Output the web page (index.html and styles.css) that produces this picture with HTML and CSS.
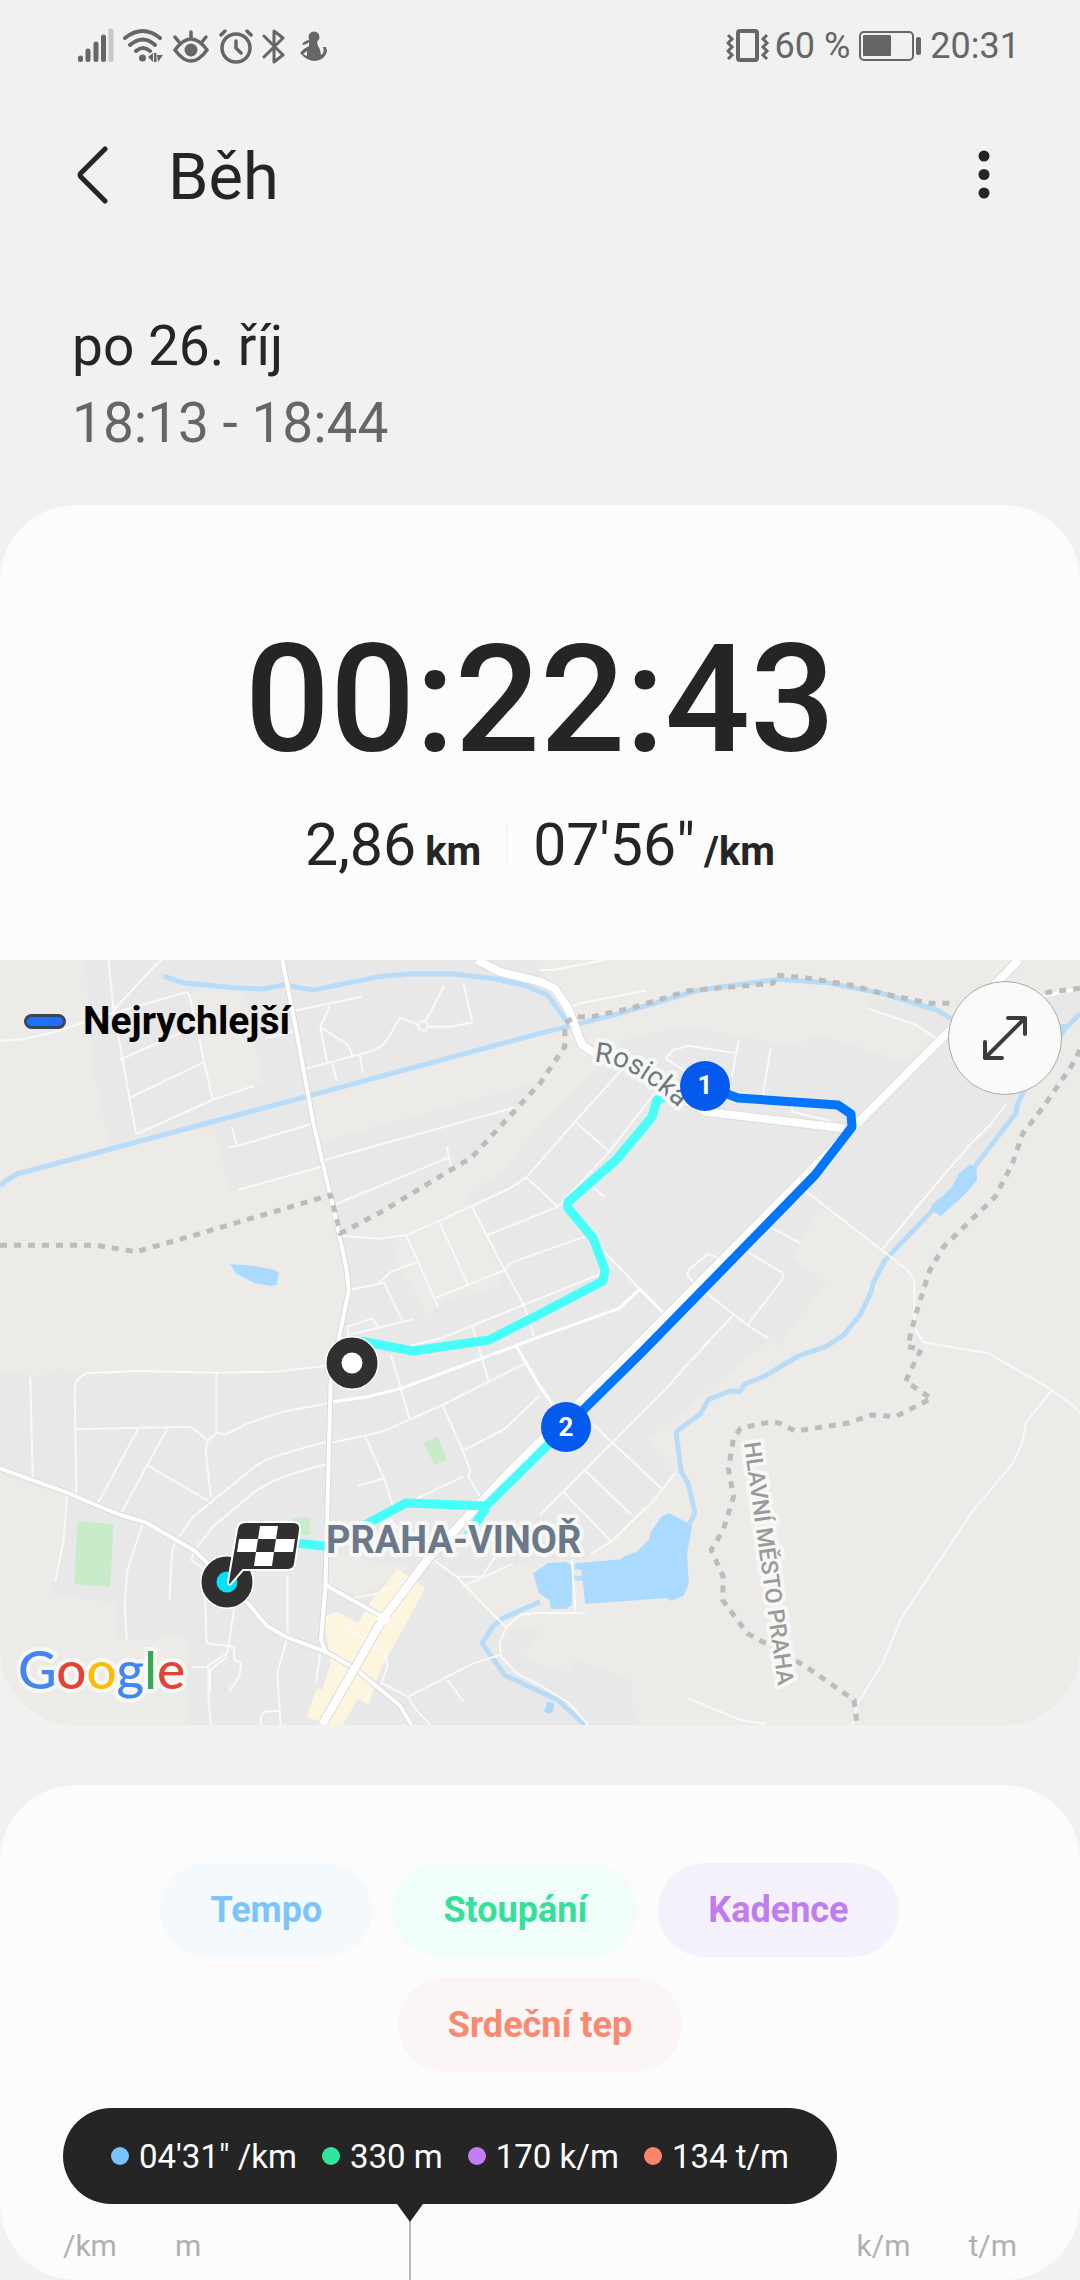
FILE: index.html
```html
<!DOCTYPE html>
<html lang="cs">
<head>
<meta charset="utf-8">
<meta name="viewport" content="width=device-width, initial-scale=1">
<title>Běh</title>
<link rel="stylesheet" href="styles.css">
</head>
<body>
<div class="status-bar">
  <div class="status-group">
    <svg width="36" height="36" viewBox="0 0 36 36" aria-hidden="true"><g stroke="#666" stroke-width="5" stroke-linecap="round"><path d="M2.5 30v1.500M10 23v8.500M18 16v15.500M25.500 9v22.500"/><path d="M33 3v28.500" stroke="#c8c8c8"/></g></svg>
    <svg width="40" height="36" viewBox="0 0 40 36" aria-hidden="true"><g fill="none" stroke="#666" stroke-width="4" stroke-linecap="round"><path d="M2 10Q20-4 37 10M7 17Q20 6 32 17M13 23Q20 17 27 23"/></g><circle cx="19.500" cy="30" r="3.500" fill="#666"/><path d="M25 29l5-4v9zM31 25h2.500v9H31zM34 27h6l-5 7z" fill="#666"/></svg>
    <svg width="38" height="36" viewBox="0 0 38 36" aria-hidden="true"><g fill="none" stroke="#666" stroke-width="3.500" stroke-linecap="round"><path d="M3 22Q19 0 35 22Q19 44 3 22zM19 4v7M3 9l4 5M34 9l-4 5"/></g><circle cx="19" cy="22" r="6.500" fill="#666"/></svg>
    <svg width="34" height="36" viewBox="0 0 34 36" aria-hidden="true"><g fill="none" stroke="#666" stroke-width="3.500" stroke-linecap="round"><circle cx="17" cy="20" r="14"/><path d="M17 13v7l5 5M2 7l4-4M32 7l-4-4"/></g></svg>
    <svg width="24" height="36" viewBox="0 0 24 36" aria-hidden="true"><path d="M2 8l19 19-9 7V3l9 7L2 29" fill="none" stroke="#666" stroke-width="3" stroke-linejoin="round" stroke-linecap="round"/></svg>
    <svg class="seal" width="28" height="36" viewBox="0 0 28 36" aria-hidden="true"><circle cx="15" cy="9" r="5.500" fill="#666"/><path d="M10 12q-6 1-7 5q6-1 7-3v4q-5 2-9 7q7 8 15 8q10-1 12-10l-1-4h-3q2 6-2 8q-1-7-3-9l-1-5z" fill="#666"/><path d="M8 23l-4 3 4 2z" fill="#f1f1f1"/></svg>
  </div>
  <div class="status-group status-right">
    <svg width="44" height="36" viewBox="0 0 44 36" aria-hidden="true"><g fill="none" stroke="#666"><rect x="12" y="3" width="19" height="29" rx="2" stroke-width="4"/><path d="M2 7l4 4-4 4 4 4-4 4 4 4-4 4M41 7l-4 4 4 4-4 4 4 4-4 4 4 4" stroke-width="3"/></g></svg>
    <span class="battery-label">60 %</span>
    <svg width="64" height="36" viewBox="0 0 64 36" aria-hidden="true"><rect x="1" y="4" width="53" height="28" rx="4" fill="none" stroke="#666" stroke-width="2"/><rect x="4" y="7" width="28" height="21" rx="1" fill="#666"/><rect x="57" y="9" width="5" height="18" rx="2" fill="#666"/></svg>
    <span class="clock">20:31</span>
  </div>
</div>

<header class="app-bar">
  <button class="icon-button" type="button" aria-label="Zpět"><svg width="32" height="58" viewBox="0 0 32 58"><path d="M29 3L5 27q-2 2 0 4l24 24" fill="none" stroke="#252525" stroke-width="5" stroke-linecap="round"/></svg></button>
  <h1 class="title">Běh</h1>
  <button class="icon-button" type="button" aria-label="Další možnosti"><svg width="12" height="50" viewBox="0 0 12 50"><g fill="#252525"><circle cx="6" cy="6" r="5.500"/><circle cx="6" cy="24.500" r="5.500"/><circle cx="6" cy="43" r="5.500"/></g></svg></button>
</header>

<main>
  <div class="when">
    <p class="date">po 26. říj</p>
    <p class="time">18:13 - 18:44</p>
  </div>

  <section class="card summary">
    <p class="duration">00:22:43</p>
    <div class="metrics">
      <p class="metric">2,86<span class="unit">km</span></p>
      <span class="metric-divider"></span>
      <p class="metric">07'56"<span class="unit">/km</span></p>
    </div>
    <div class="map">
      <svg class="map-canvas" viewBox="0 0 1080 765" aria-hidden="true">
        <svg width="1080" height="765" viewBox="0 30 3136 2295" preserveAspectRatio="none">
          <rect y="30" width="3136" height="2295" fill="#e8e8e8"/>
          <g fill="#ecebe7">
            <path d="M0 30H247L272 370 320 590 620 530 668 720 690 720 945 650 960 740 985 860 1012 1022 975 1200 945 1248 770 1265 250 1265 168 1258 115 1282 0 1262z"/>
            <path d="M555 125H710L762 400 617 450z"/>
            <path d="M905 440L1568 250 1658 212 1630 140 1548 30H3136V120L3020 145 3060 220 2780 200 2528 135 2520 175 2740 260 2628 335 2378 255 2303 290 1993 228 1808 270 1568 520 1470 650 1360 740 1368 768 1280 815 1180 855 1100 868 985 858 1370 625 1400 590 1568 395 930 575z"/>
            <path d="M3136 190L3088 230 3048 330 2968 440 2953 480 2833 640 2698 790 2578 920 2558 900 2378 770 2303 925 2398 1000 2258 1190 2233 1170 1883 1470 1958 1570 1773 1775 1698 1830 1548 1830 1338 1900 1468 2040 1568 2040 1523 2115 1568 2145 1653 2165 1668 2130 1833 2190 1838 2280 1858 2325H3136z"/>
            <path d="M0 1575L195 1635 185 1770 145 1930 335 1960 338 2072 540 2060 550 2325H0zM950 1810L1190 1850 1130 1890 1040 1940 950 1905z"/>
            <path d="M1130 880L1180 860 1370 768 1415 855 1425 910 1460 960 1450 1005 1280 1060 1240 1100z"/>
          </g>
          <g fill="#c8ecca"><path d="M225 1713L330 1722 320 1910 215 1902zM1230 1478L1270 1460 1298 1528 1262 1546zM850 1703H900V1755H850z"/></g>
          <path fill="#fdf6de" d="M1155 1857L1235 1915 1100 2170 1070 2265 1040 2245 995 2325H955L890 2300 920 2215 935 2220 960 2140 940 2000 980 1985 1040 2018 1080 1950z"/>
          <g class="stream">
            <path d="M0 708L20 690 50 672 900 437 1568 250 1800 190 2030 120 2260 88 2400 98 2560 130 2720 180 2760 205 3100 230 3136 190M3100 225L2985 400 2955 460 2950 490 2830 650 2700 790 2570 930 2535 1000 2530 1025 2500 1090 2450 1155 2398 1190 2318 1218 2218 1280 2163 1302 2148 1325 2118 1323 2058 1348 2033 1392 1963 1445 1978 1565 1998 1600 2018 1688 2003 1720"/>
            <path d="M475 78L530 98 680 113 765 117 825 105 910 120 1100 80 1180 72 1320 72 1440 87 1520 105 1590 135 1650 220M1568 1955L1460 2005 1430 2030 1400 2080 1465 2175 1568 2225 1620 2250 1698 2325M1650 1885H1700"/>
          </g>
          <g fill="#aadaff">
            <path d="M1943 1690L2010 1725 1995 1810 2000 1900 1985 1937 1948 1952 1935 1944 1700 1962 1688 1860 1668 1858 1670 1840 1805 1828 1810 1820 1850 1805 1885 1768 1888 1750 1920 1700zM1548 1870L1590 1840 1640 1835 1662 1845 1660 1965 1645 1977 1600 1977 1595 1950 1565 1930z"/>
            <path d="M668 942L740 948 800 960 810 970 803 1005 785 1008 740 1000 685 970zM2817 643L2835 655 2837 690 2800 735 2732 798 2703 780 2705 765 2760 720 2785 670zM1580 2285L1590 2255 1610 2260 1605 2285 1595 2292z"/>
          </g>
          <g class="lane">
            <path d="M315 30L330 180 395 552M470 30L455 42 330 180M0 272L70 268 180 240 260 210 540 127 550 135 617 448M347 330L575 225M370 447L595 335M397 552L617 450 735 408M665 592L690 588 912 520M673 530L688 588M690 720L940 648M942 630L1495 472M975 762L1305 622M1297 588L1310 650"/>
            <path d="M855 182L1050 140M952 160L955 175 930 230 950 340M930 230L1010 285 1025 318M885 357L1080 303C1130 285 1135 240 1162 203L1215 225M1235 215L1290 108M1242 230H1310L1372 217 1345 98M965 340L978 392M1045 315L1054 370M770 265L850 245"/>
            <circle cx="1228" cy="228" r="14"/>
            <path d="M988 857L1100 866 1180 856 1370 768 1480 715 1528 682 1670 515 1800 365M1528 682L1568 720 1620 770M1370 768L1465 960 1520 1062 1550 1160M1412 857L1620 770M1465 960L1480 940 1568 907 1698 860M1262 1045L1465 960M1180 856L1272 1070M1275 815L1358 1002M1015 1020L1115 998 1170 1115M1100 998L1135 965 1210 937M1010 1160V1130L1080 1105 1100 1132M1010 1155L1200 1108M1190 1187L1280 1165 1568 1045 1748 970M1370 1125L1390 1190 1420 1298"/>
            <path d="M88 1282L95 1585M945 1248L800 1265 630 1268 400 1263 250 1270C220 1285 217 1300 217 1330L222 1640M217 1438L555 1430 603 1472 597 1500 612 1640M628 1268V1448M603 1472L628 1448 655 1453 720 1420 820 1385 955 1360M403 1433L283 1662M487 1433L350 1692M430 1547L603 1652M948 1475C860 1500 780 1520 740 1550L560 1700 510 1775C495 1800 500 1830 492 1950M948 1543C800 1580 760 1610 740 1625L620 1728 565 1800 555 1830 610 1870"/>
            <path d="M955 1480L1110 1445 1285 1365 1525 1240M1060 1458L1115 1585 1140 1665M1040 1607L1115 1585M1165 1320L1190 1410M1135 1215L1165 1315M1285 1365L1345 1505 1365 1560 1360 1580 1400 1650M1345 1502L1465 1437 1568 1335M1205 1648L1345 1580M415 1718L370 1860 362 1960 368 2070M195 1635L185 1770 160 1895M835 1875V2060L805 2170 815 2325M757 2325V2300L770 2285 815 2282M680 1975L660 2110 600 2150 555 2152M595 1930L600 2080 680 2090V2130L700 2140 695 2180 665 2225M610 2225V2160L660 2120M605 2150V2240L612 2325"/>
            <path d="M1130 1705L1200 1785 1325 1880 1470 2033 1450 2080 1455 2120 1500 2170 1568 2205 1653 2260 1708 2325M1325 1880L1400 1880 1450 1800M1345 1910L1490 1840M1470 2033L1510 1995 1568 1988 1700 1990M1660 1830L1672 1990M1450 2115L1375 2140 1185 2240 1110 2200M1300 2190L1345 2255M995 2027L1120 2110 1125 2150 1105 2205M1185 2240L1205 2275 1250 2325M1025 1945L1100 1930 1180 1890M930 2110L918 2195"/>
            <path d="M2063 1170L1985 1255 1940 1310 1568 1695M1718 1420L1920 1615M1700 1563L1835 1695M1635 1625L1775 1775M1958 1570L1900 1650 1775 1775 1715 1812M1568 60H1608L1755 30M1650 175L1690 158 1875 122M2520 175L2660 225 2720 265M1933 325L1955 300 2000 287 2138 310M1933 325L2000 370M2145 272L2125 380M2238 295L2215 435M1670 515L1770 605 1900 430M1770 605L1620 770M1720 710L1755 740M2300 470V485L2400 510 2425 520M1755 905L1858 1017"/>
            <path d="M2335 720L2560 900 2635 960 2655 990V1130L2680 1175 2690 1178 2870 1210 3055 1320 3120 1370 3136 1390M2560 900L2740 675 2820 580 2875 525 2923 460M3055 1320L2980 1415 2968 1480 2940 1540 2820 1690 2670 1920 2615 2010 2560 2145 2490 2260 2475 2325M2235 830L2325 880M2170 905L2275 970 2270 990 2170 1125 2230 1165M2050 1028L2170 1125M2130 1095L2035 1198M2090 925L2055 912 2000 960 1995 975 2015 1000M2000 2245L2150 2310 2225 2322"/>
          </g>
          <g class="street">
            <path d="M958 1357L1060 1342 1165 1315 1568 1160 1798 1075 1858 1017 1933 1095M1500 1190L1568 1310 1606 1365M3020 140L3136 115"/>
          </g>
          <path class="casing-small" d="M820 30L860 240 910 520 960 740 1005 950 1013 1020 985 1160 960 1300 945 1910 932 2070 945 2105M0 1555L200 1630 285 1668 350 1695 425 1718 565 1802 720 1960 775 2028 835 2063 945 2105 1030 2155 1160 2265 1195 2325M945 1905L1110 2000"/>
          <path class="road-small" d="M820 30L860 240 910 520 960 740 1005 950 1013 1020 985 1160 960 1300 945 1910 932 2070 945 2105M0 1555L200 1630 285 1668 350 1695 425 1718 565 1802 720 1960 775 2028 835 2063 945 2105 1030 2155 1160 2265 1195 2325M945 1905L1110 2000"/>
          <path class="casing" d="M2958 30L2740 260 2475 535 1838 1198 1674 1365 1470 1575 1240 1830 1110 2010 1030 2155 935 2325M1385 30L1450 65 1568 95 1610 115 1650 175 1690 285 1720 305 1800 335 2050 485 2450 535"/>
          <path class="road" d="M2958 30L2740 260 2475 535 1838 1198 1674 1365 1470 1575 1240 1830 1110 2010 1030 2155 935 2325M1385 30L1450 65 1568 95 1610 115 1650 175 1690 285 1720 305 1800 335 2050 485 2450 535"/>
          <circle cx="1113" cy="2006" r="18" fill="#fff"/>
          <path class="border-line" d="M0 886H280L395 905 560 857 960 735 988 850 1100 790 1370 622 1568 400 1640 290V220L1670 200H1720L1830 175 2000 122 2245 100 2250 75 2330 82 2470 105 2560 130 2700 160 2760 160M3136 115L3020 130M3136 300L3110 350 3070 410 3030 470 2970 550 2940 640 2890 740 2830 800 2740 890 2700 960 2660 1090 2635 1190 2675 1197 2640 1270 2630 1295 2705 1345 2600 1400 2530 1395 2460 1420 2310 1443 2260 1418 2225 1418 2150 1435 2130 1465 2115 1555 2130 1640 2100 1740 2065 1800 2100 1880 2098 1950 2170 2050 2240 2090 2340 2150 2480 2250 2488 2325"/>
        </svg>

        <g fill="none" stroke-width="9" stroke-linejoin="round">
          <path stroke="#47fff8" d="M360 381L413 391 489 380 540 354 603 321 605 310 593 278 568 248V242L616 200 652 157 657 140 690 128M566 467L486 546 406 543 365 565 324 586 296 583M486 548L468 575M250 636l-6-4"/>
          <path stroke="#0076ff" d="M705 126L738 138 838 145 851 154 852 167 815 215 643 391 566 467"/>
        </g>

        <g class="place-label">
          <path id="rosicka" d="M594 102C622 103 648 118 694 162" fill="none" stroke="none"/>
          <text class="label-street"><textPath href="#rosicka">Rosická</textPath></text>
          <text class="label-town" x="326" y="593">PRAHA-VINOŘ</text>
          <text class="label-region" transform="translate(744 483) rotate(82)">HLAVNÍ MĚSTO PRAHA</text>
          <text class="label-brand" x="18" y="729"><tspan fill="#4285f4">G</tspan><tspan fill="#e34234">o</tspan><tspan fill="#fbbc05">o</tspan><tspan fill="#4285f4">g</tspan><tspan fill="#34a853">l</tspan><tspan fill="#e34234">e</tspan></text>
        </g>

        <g class="km-marker">
          <circle cx="705" cy="126" r="25"/><text x="705" y="134">1</text>
          <circle cx="566" cy="467" r="25"/><text x="566" y="476">2</text>
        </g>
        <circle cx="352" cy="403" r="18" fill="#fff" stroke="#fff" stroke-width="18"/>
        <circle cx="352" cy="403" r="18" fill="#fff" stroke="#303030" stroke-width="15"/>
        <circle cx="227" cy="622" r="18" fill="#fff" stroke="#fff" stroke-width="18"/>
        <circle cx="227" cy="622" r="18" fill="#00e2fb" stroke="#303030" stroke-width="15"/>
        <path d="M246 562h47q8 0 7 8l-5 34q-1 6-7 6h-45l-12 14q-3 2-3-2l9-53q1-7 9-7z" fill="#303030" stroke="#fff" stroke-width="2"/>
        <path d="M260 566h18l-2 13h19l-2 13h-19l-2 14h-18l2-14h-19l2-13h19zM258 579l-2 13h18l2-13z" fill="#fff" fill-rule="evenodd"/>
      </svg>
      <p class="legend"><span class="legend-swatch"></span>Nejrychlejší</p>
      <button class="expand" type="button" aria-label="Zvětšit mapu"><svg width="46" height="46" viewBox="0 0 46 46"><path d="M3 43L43 3M26 3h17v16M3 27v16h17" fill="none" stroke="#3c3c3c" stroke-width="4" stroke-linecap="round" stroke-linejoin="round"/></svg></button>
    </div>
  </section>

  <section class="card chart">
    <div class="chips">
      <div class="chip-row chip-row-first">
        <button class="chip chip-pace" type="button">Tempo</button>
        <button class="chip chip-climb" type="button">Stoupání</button>
        <button class="chip chip-cadence" type="button">Kadence</button>
      </div>
      <div class="chip-row">
        <button class="chip chip-heart" type="button">Srdeční tep</button>
      </div>
    </div>
    <div class="readout">
      <span class="reading"><i class="dot dot-pace"></i>04'31" /km</span>
      <span class="reading"><i class="dot dot-climb"></i>330 m</span>
      <span class="reading"><i class="dot dot-cadence"></i>170 k/m</span>
      <span class="reading"><i class="dot dot-heart"></i>134 t/m</span>
      <span class="pointer"></span>
    </div>
    <div class="axis">
      <span>/km</span><span>m</span><span class="axis-right">k/m</span><span>t/m</span>
    </div>
  </section>
</main>
</body>
</html>
```
FILE: styles.css
```css
* {
  box-sizing: border-box;
}

body {
  margin: 0;
  background: #f1f1f1;
  color: #252525;
  font-family: Roboto, "Noto Sans", sans-serif;
}

p,
h1 {
  margin: 0;
  font-weight: 400;
}

button {
  margin: 0;
  padding: 0;
  border: 0;
  background: none;
  font-family: inherit;
}

svg {
  display: block;
}

/* Status bar */
.status-bar {
  display: flex;
  justify-content: space-between;
  align-items: center;
  height: 92px;
  padding: 0 60px 0 78px;
  color: #666;
  font-size: 36px;
}

.status-group {
  display: flex;
  align-items: center;
  gap: 9px;
}

.seal {
  margin-left: 4px;
}

.status-right {
  gap: 5px;
}

.clock {
  margin-left: 2px;
}

.battery-label {
  margin-right: 4px;
}

/* App bar */
.app-bar {
  display: flex;
  align-items: center;
  height: 166px;
  padding: 0 90px 0 76px;
}

.title {
  flex: 1;
  margin-left: 60px;
  padding-top: 4px;
  font-size: 65px;
  line-height: 76px;
}

/* Date */
.when {
  padding: 50px 72px 43px;
  font-size: 55px;
  line-height: 77px;
}

.time {
  color: #666;
}

.card {
  border-radius: 76px;
  background: #fcfcfc;
  overflow: hidden;
}

/* Summary */
.summary {
  padding-top: 120px;
}

.duration {
  font-size: 150px;
  font-weight: 500;
  line-height: 150px;
  text-align: center;
}

.metrics {
  display: flex;
  justify-content: center;
  align-items: center;
  gap: 25px;
  padding: 35px 0 80px;
}

.metric {
  display: flex;
  align-items: baseline;
  gap: 9px;
  height: 70px;
  font-size: 59px;
  line-height: 70px;
  white-space: nowrap;
}

.unit {
  font-size: 40px;
  font-weight: 700;
  line-height: 46px;
}

.metric-divider {
  width: 2px;
  height: 38px;
  background: #f4f4f4;
}

/* Map */
.map {
  position: relative;
}

.map-canvas {
  width: 100%;
  height: auto;
}

.map-canvas path,
.map-canvas circle {
  vector-effect: non-scaling-stroke;
}

.stream,
.lane,
.street,
.road,
.road-small,
.casing,
.casing-small,
.border-line {
  fill: none;
  stroke-linejoin: round;
}

.stream {
  stroke: #b8dcf8;
  stroke-width: 5px;
}

.lane {
  stroke: #f9f9f9;
  stroke-width: 2px;
}

.street {
  stroke: #fff;
  stroke-width: 3px;
}

.casing {
  stroke: #dcdcdc;
  stroke-width: 10px;
}

.road {
  stroke: #fff;
  stroke-width: 8px;
}

.casing-small {
  stroke: #dadada;
  stroke-width: 6px;
}

.road-small {
  stroke: #fff;
  stroke-width: 4px;
}

.border-line {
  stroke: #bcbcbc;
  stroke-width: 5px;
  stroke-dasharray: 7 7;
}

.place-label text {
  paint-order: stroke;
  stroke: #f7f7f5;
  stroke-width: 8px;
  stroke-linejoin: round;
}

.label-street {
  fill: #6c7a80;
  font-size: 28px;
}

.label-town {
  fill: #6b7889;
  font-size: 38px;
  font-weight: 700;
}

.label-region {
  fill: #9a9a9a;
  font-size: 23px;
  font-weight: 500;
}

.label-brand {
  font-family: Lato, Roboto, sans-serif;
  font-size: 53px;
  font-weight: 500;
}

.km-marker circle {
  fill: #055aee;
}

.km-marker text {
  fill: #fff;
  font-size: 26px;
  font-weight: 700;
  text-anchor: middle;
}

.legend {
  position: absolute;
  top: 38px;
  left: 24px;
  display: flex;
  align-items: center;
  gap: 17px;
  color: #000;
  font-size: 39px;
  font-weight: 700;
  line-height: 46px;
}

.legend-swatch {
  width: 42px;
  height: 15px;
  border: 3px solid #37475a;
  border-radius: 8px;
  background: #1d6eff;
}

.expand {
  position: absolute;
  top: 21px;
  right: 18px;
  display: grid;
  place-items: center;
  width: 114px;
  height: 114px;
  border: 1px solid #aaa;
  border-radius: 50%;
  background: #fafafa;
}

/* Chart */
.chart {
  margin-top: 60px;
  padding: 78px 63px 16px;
}

.chips {
  display: grid;
  gap: 21px;
}

.chip-row {
  display: flex;
  justify-content: center;
  gap: 21px;
}

.chip-row-first {
  padding-right: 21px;
}

.chip {
  height: 94px;
  padding: 0 50px;
  border-radius: 47px;
  font-size: 36px;
  font-weight: 700;
}

.chip-pace {
  background: #f4f9fd;
  color: #7cc4ff;
}

.chip-climb {
  background: #f1fdf9;
  color: #38df9b;
}

.chip-cadence {
  background: #f5f1fc;
  color: #c17cf0;
}

.chip-heart {
  background: #fcf5f5;
  color: #fb8871;
}

.readout {
  position: relative;
  display: flex;
  align-items: center;
  gap: 25px;
  width: fit-content;
  height: 96px;
  margin-top: 36px;
  padding: 0 48px;
  border-radius: 48px;
  background: #252525;
  color: #fff;
  font-size: 33px;
  white-space: nowrap;
}

.reading {
  display: flex;
  align-items: center;
  gap: 10px;
}

.dot {
  width: 18px;
  height: 18px;
  border-radius: 50%;
}

.dot-pace {
  background: #78c2ff;
}

.dot-climb {
  background: #30e59d;
}

.dot-cadence {
  background: #c37df4;
}

.dot-heart {
  background: #ff8469;
}

.pointer {
  position: absolute;
  top: 96px;
  left: 334px;
  width: 26px;
  height: 76px;
  background: linear-gradient(#b8b8b8, #b8b8b8) center / 2px 100% no-repeat;
}

.pointer::before {
  content: "";
  display: block;
  height: 18px;
  background: #252525;
  clip-path: polygon(0 0, 100% 0, 50% 100%);
}

.axis {
  display: flex;
  gap: 58px;
  margin-top: 24px;
  color: #b0b0b0;
  font-size: 30px;
  line-height: 36px;
}

.axis-right {
  margin-left: auto;
}
```
